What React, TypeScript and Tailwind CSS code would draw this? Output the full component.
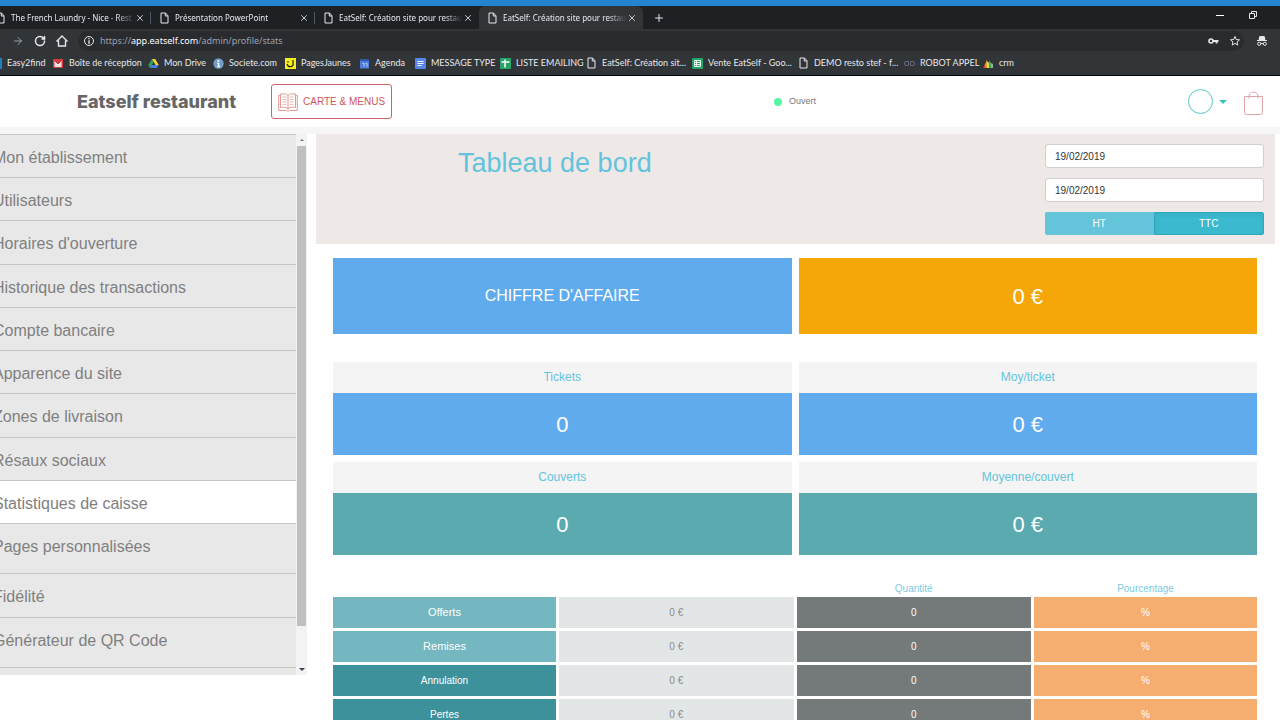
import type { ReactNode } from "react";
import { Plus, X, ArrowRight, ArrowLeft, RotateCw } from "lucide-react";

const svgProps = { fill: "none", stroke: "currentColor" };

function PageIcon() {
  return (
    <svg viewBox="0 0 11 12" className="h-3 w-[11px] shrink-0 text-gray-200" {...svgProps}>
      <path d="M2 1h4.5L9 3.8V11H2z M6.3 1v3H9" />
    </svg>
  );
}

// Bookmark favicons, all on an 11px box
const favicons: Record<string, ReactNode> = {
  easy: <rect width="11" height="11" fill="#1b7fc0" />,
  gmail: (
    <>
      <rect y="1" width="10" height="9" rx="1" fill="#d93a3f" />
      <path d="M1.5 9V2.5L5 6l3.5-3.5V9" fill="#f6e4e4" />
      <path d="M1.5 2.5L5 6l3.5-3.5" stroke="#c8373a" fill="none" />
    </>
  ),
  drive: (
    <>
      <path d="M4 1L.3 7l1.6 3L5.6 4z" fill="#2aa35c" />
      <path d="M4 1h3.2l3.5 6H7.5z" fill="#f7cf3b" />
      <path d="M1.9 10l1.7-3h7.1L9 10z" fill="#4180e0" />
    </>
  ),
  info: (
    <>
      <circle cx="5.5" cy="5.5" r="5.2" fill="#6f9cc9" />
      <circle cx="5.5" cy="2.9" r="1" fill="#fff" />
      <path d="M4 4.8h2.3v3.4h1v1H4v-1h.8V5.8H4z" fill="#fff" />
    </>
  ),
  pj: (
    <>
      <rect width="11" height="11" fill="#f7ee1d" />
      <path d="M3 3v1.5M8 2v5M2 6c1 3.5 5 3.5 6.5 .5" stroke="#222" strokeWidth="1.2" fill="none" />
    </>
  ),
  agenda: (
    <>
      <rect x="1" y="1" width="9" height="9.5" fill="#4f7de0" />
      <rect x="1" y="1" width="9" height="2" fill="#3158a8" />
      <path d="M3.5 5.5h1.5v3M6.5 5.5h1.5v3" stroke="#b9cdf7" fill="none" />
    </>
  ),
  doc: (
    <>
      <rect width="11" height="11" rx="1" fill="#5787e6" />
      <path d="M2.5 3.5h6M2.5 5.5h6M2.5 7.5h4" stroke="#fff" fill="none" />
    </>
  ),
  plus: (
    <>
      <rect width="11" height="11" fill="#27a365" />
      <path d="M1.5 4h8M5 1.5v8" stroke="#fff" strokeWidth="1.5" fill="none" />
    </>
  ),
  sheet: (
    <>
      <rect width="11" height="11" rx="1" fill="#21a565" />
      <path d="M2.5 2.5h6v6h-6zM2.5 4.5h6M2.5 6.5h6M4.5 2.5v6" stroke="#fff" strokeWidth=".9" fill="none" />
    </>
  ),
  robot: (
    <path
      d="M4.5 3.5H2a1.5 1.5 0 0 0-1.5 1.5v1A1.5 1.5 0 0 0 2 7.5h2.5zM6.5 3.5H9a1.5 1.5 0 0 1 1.5 1.5v1A1.5 1.5 0 0 1 9 7.5H6.5z"
      stroke="#676a78"
      fill="none"
    />
  ),
  crm: (
    <>
      <path d="M.5 10L4 1.5V10z" fill="#e8a52b" />
      <path d="M4 10V3l2 2v5z" fill="#d6dd45" />
      <path d="M6 10V2l2 3v5z" fill="#41a35c" />
      <path d="M8 10V5l2 1v4z" fill="#8bb796" />
      <path d="M.5 10L2 6l1 4z" fill="#d5483a" />
    </>
  ),
};

const tabs = [
  { title: "The French Laundry - Nice - Rest", active: false },
  { title: "Présentation PowerPoint", active: false },
  { title: "EatSelf: Création site pour restau", active: false },
  { title: "EatSelf: Création site pour restau", active: true },
];

const bookmarks = [
  { label: "Easy2find", icon: "easy", width: "w-[62px]" },
  { label: "Boîte de réception", icon: "gmail", width: "w-[95px]" },
  { label: "Mon Drive", icon: "drive", width: "w-[65px]" },
  { label: "Societe.com", icon: "info", width: "w-[72px]" },
  { label: "PagesJaunes", icon: "pj", width: "w-[74px]" },
  { label: "Agenda", icon: "agenda", width: "w-[56px]" },
  { label: "MESSAGE TYPE", icon: "doc", width: "w-[85px]" },
  { label: "LISTE EMAILING", icon: "plus", width: "w-[86px]" },
  { label: "EatSelf: Création sit...", icon: "page", width: "w-[106px]" },
  { label: "Vente EatSelf - Goo...", icon: "sheet", width: "w-[106px]" },
  { label: "DEMO resto stef - f...", icon: "page", width: "w-[106px]" },
  { label: "ROBOT APPEL", icon: "robot", width: "w-[79px]" },
  { label: "crm", icon: "crm", width: "w-[50px]" },
];

const menu = [
  "Mon établissement",
  "Utilisateurs",
  "Horaires d'ouverture",
  "Historique des transactions",
  "Compte bancaire",
  "Apparence du site",
  "Zones de livraison",
  "Résaux sociaux",
  "Statistiques de caisse",
];

const menuExtra = [
  { label: "Pages personnalisées", height: "h-[50px]" },
  { label: "Fidélité", height: "h-[44px]" },
  { label: "Générateur de QR Code", height: "h-[50px]" },
];

const stats = [
  { label: "Tickets", value: "0", color: "bg-[#60abee]" },
  { label: "Moy/ticket", value: "0 €", color: "bg-[#60abee]" },
  { label: "Couverts", value: "0", color: "bg-[#5aaab0]" },
  { label: "Moyenne/couvert", value: "0 €", color: "bg-[#5aaab0]" },
];

const rows = [
  { label: "Offerts", style: "bg-[#74b7c0] text-[11px]" },
  { label: "Remises", style: "bg-[#74b7c0] text-[11px]" },
  { label: "Annulation", style: "bg-[#3c919b] text-[10px]" },
  { label: "Pertes", style: "bg-[#3c919b] text-[10px]" },
];

function BrowserChrome() {
  return (
    <div className="border-b border-black bg-[#323538] font-['Lato','Open_Sans',sans-serif] text-[9px] text-gray-200">
      <div className="h-1.5 bg-[#2385d1]" />
      <div className="flex h-[23px] items-stretch bg-[#1d2124]">
        <div className="-ml-[13px] flex">
          {tabs.map((tab, i) => (
            <div
              key={i}
              className={`flex w-[164px] items-center pl-2 ${
                tab.active ? "rounded-t-md bg-[#323538]" : ""
              }`}
            >
              <PageIcon />
              <span className="ml-[5px] flex-1 overflow-hidden mask-r-from-85% font-['Noto_Sans',sans-serif] text-[8px] whitespace-nowrap">
                {tab.title}
              </span>
              <button aria-label="Fermer l'onglet">
                <X className="size-2.5" />
              </button>
              <span className={`ml-[5px] h-3 w-px ${i < 2 ? "bg-gray-600" : ""}`} />
            </div>
          ))}
        </div>
        <button aria-label="Nouvel onglet" className="ml-2.5">
          <Plus className="size-3" />
        </button>
        <div className="ml-auto flex items-start gap-[22px] pt-1 pr-[22px]">
          <button aria-label="Réduire" className="flex size-2.5 items-center">
            <span className="h-px w-2 bg-white" />
          </button>
          <button aria-label="Restaurer">
            <svg viewBox="0 0 10 10" className="size-2.5" {...svgProps}>
              <path d="M1.5 3.5h5v5h-5zM3.5 3V1.5h5v5H7" />
            </svg>
          </button>
        </div>
      </div>

      <div className="flex h-6 items-center">
        <ArrowLeft className="-ml-2.5 size-3 shrink-0" />
        <ArrowRight className="ml-2.5 size-3 shrink-0 text-gray-400" />
        <RotateCw className="ml-2.5 size-3 shrink-0" strokeWidth={3} />
        <svg viewBox="0 0 12 12" className="ml-2.5 size-3 shrink-0" {...svgProps}>
          <path d="M.5 6.5L6 1l5.5 5.5M2.5 5.5V11h7V5.5" strokeWidth="1.4" />
        </svg>
        <div className="ml-2.5 flex h-5 flex-1 items-center rounded-full bg-[#292b2e] pr-[3px] pl-[5px]">
          <svg viewBox="0 0 12 12" className="size-3" {...svgProps}>
            <circle cx="6" cy="6" r="4.5" />
            <path d="M6 3v1.2M6 5.2V9" strokeWidth="1.3" />
          </svg>
          <span className="ml-[5px] font-['Noto_Sans',sans-serif] text-[9px] text-gray-400">
            https://<span className="text-white">app.eatself.com</span>/admin/profile/stats
          </span>
          <svg viewBox="0 0 11 8" className="ml-auto h-2 w-[11px]" {...svgProps}>
            <circle cx="3" cy="4" r="2" strokeWidth="1.6" />
            <path d="M5 4h5.5M8.5 4v2.5" strokeWidth="1.8" />
          </svg>
          <svg viewBox="0 0 12 12" className="ml-2.5 size-3" {...svgProps}>
            <path d="M6 1.5l1.3 3 3.2.3-2.4 2.1.7 3.2L6 8.4l-2.8 1.7.7-3.2L1.5 4.8l3.2-.3z" />
          </svg>
        </div>
        <svg viewBox="0 0 12 12" className="mr-3 ml-3 size-3 shrink-0" {...svgProps}>
          <path d="M3 4.5L3.8 1.5h4.4L9 4.5z" fill="currentColor" />
          <path d="M1 5.5h10M4.8 8.5h2.4" />
          <circle cx="3.2" cy="8.8" r="1.6" />
          <circle cx="8.8" cy="8.8" r="1.6" />
        </svg>
      </div>

      <nav className="-ml-[9px] flex h-[22px] items-center pb-0.5 whitespace-nowrap">
        {bookmarks.map((b) => (
          <a key={b.label} href="#" className={`flex shrink-0 items-center gap-[5px] ${b.width}`}>
            {b.icon === "page" ? (
              <PageIcon />
            ) : (
              <svg viewBox="0 0 11 11" className="size-[11px] shrink-0">
                {favicons[b.icon]}
              </svg>
            )}
            {b.label}
          </a>
        ))}
      </nav>
    </div>
  );
}

function Header() {
  return (
    <header className="flex h-[51px] items-center bg-white pr-4 pl-[77px]">
      <h1 className="w-[194px] font-['Inter',sans-serif] text-[18px] font-extrabold whitespace-nowrap text-[#666]">
        Eatself restaurant
      </h1>
      <a
        href="#"
        className="flex h-[35px] items-center gap-[5px] rounded-[3px] border border-[#d0626a] px-1.5 text-[10px] whitespace-nowrap text-[#d0565c]"
      >
        <svg viewBox="0 0 20 20" className="size-5 text-[#e09a94]" {...svgProps}>
          <path d="M10 3.5C8 1.5 5 1.5 2.5 2v13.5c2.5-.5 5.5-.5 7.5 1.5 2-2 5-2 7.5-1.5V2C15 1.5 12 1.5 10 3.5zM10 3.5V17" />
          <path d="M2.5 3.5H.7v15h7.8l1.5.8 1.5-.8h7.8v-15h-1.8" />
          <path
            d="M4.5 5c1.5-.3 3-.2 4 .6M4.5 7.5c1.5-.3 3-.2 4 .6M4.5 10c1.5-.3 3-.2 4 .6M4.5 12.5c1.5-.3 3-.2 4 .6M15.5 5c-1.5-.3-3-.2-4 .6M15.5 7.5c-1.5-.3-3-.2-4 .6M15.5 10c-1.5-.3-3-.2-4 .6M15.5 12.5c-1.5-.3-3-.2-4 .6"
            strokeWidth=".8"
          />
        </svg>
        CARTE &amp; MENUS
      </a>
      <div className="flex flex-1 items-center justify-center gap-[7px] pl-2.5 text-[9px] text-[#777]">
        <span className="size-2 rounded-full bg-[#55f5a3]" />
        Ouvert
      </div>
      <button aria-label="Compte" className="flex items-center gap-1.5">
        <span className="size-[25px] rounded-full border border-[#55c9c3]" />
        <span className="border-x-4 border-t-4 border-x-transparent border-t-[#36c3b8]" />
      </button>
      <button aria-label="Panier" className="mt-1 ml-4">
        <svg viewBox="0 0 21 25" className="h-[25px] w-[21px] text-[#dfa3a8]" {...svgProps}>
          <path d="M1.5 5.5h18v16a2 2 0 0 1-2 2h-14a2 2 0 0 1-2-2z" />
          <path d="M6 7.5v-2a4.5 4.5 0 0 1 9 0v2" />
        </svg>
      </button>
    </header>
  );
}

function Sidebar() {
  return (
    <aside className="flex h-[541px] w-[307px] shrink-0 overflow-hidden text-[16px] whitespace-nowrap text-[#808080]">
      <nav className="w-[296px] bg-[#e8e8e8]">
        <div className="flex h-[389px] flex-col">
          {menu.map((label) => (
            <a
              key={label}
              href="#"
              className={`flex-1 border-t border-[#c6c6c6] pt-[11px] leading-6 ${
                label === "Statistiques de caisse" ? "bg-white" : ""
              }`}
            >
              <span className="-ml-[7px]">{label}</span>
            </a>
          ))}
        </div>
        {menuExtra.map((item) => (
          <a
            key={item.label}
            href="#"
            className={`block border-t border-[#c6c6c6] pt-[11px] leading-6 ${item.height}`}
          >
            <span className="-ml-[7px]">{item.label}</span>
          </a>
        ))}
        <div className="h-2 border-t border-[#c6c6c6]" />
      </nav>
      {/* scrollbar */}
      <div className="flex flex-1 flex-col items-center bg-[#f3f3f3]">
        <div className="flex h-3 items-center">
          <span className="border-x-2 border-b-2 border-x-transparent border-b-gray-500" />
        </div>
        <div className="h-[480px] w-[9px] bg-[#bfbfbf]" />
        <div className="mt-auto flex h-3 items-center">
          <span className="border-x-3 border-t-3 border-x-transparent border-t-gray-700" />
        </div>
      </div>
    </aside>
  );
}

function Dashboard() {
  const field =
    "block h-6 w-full rounded-[3px] border border-[#d2cece] bg-white px-[9px] text-[10px] text-[#333]";
  return (
    <main className="ml-[9px] min-w-0 flex-1">
      <section className="flex h-[110px] justify-between bg-[#eee9e7] pr-[11px]">
        <h2 className="flex-1 pt-[11px] pl-[142px] text-[27px] leading-9 text-[#64c3dc]">
          Tableau de bord
        </h2>
        <div className="w-[219px] pt-2.5">
          <input aria-label="Date de début" defaultValue="19/02/2019" className={field} />
          <input aria-label="Date de fin" defaultValue="19/02/2019" className={`mt-2.5 ${field}`} />
          <div className="mt-2.5 flex h-[23px] text-[10px] text-white">
            <button className="flex-1 rounded-l-[2px] bg-[#63c4da]">HT</button>
            <button className="flex-1 rounded-r-[2px] border border-[#31a5bb] bg-[#3ab9cf] shadow-inner">
              TTC
            </button>
          </div>
        </div>
      </section>

      <div className="pt-3.5 pr-[18px] pl-[17px] text-center">
        <section className="grid h-[76px] grid-cols-2 items-stretch gap-x-[7px] text-white">
          <div className="flex items-center justify-center bg-[#60abee] text-[16px]">
            CHIFFRE D'AFFAIRE
          </div>
          <div className="flex items-center justify-center bg-[#f5a709] text-[22px]">0 €</div>
        </section>

        <section className="mt-7 grid grid-cols-2 gap-x-[7px] gap-y-[7px]">
          {stats.map((s) => (
            <div key={s.label}>
              <div className="flex h-[31px] items-center justify-center bg-[#f4f4f4] pb-0.5 text-[12px] text-[#64c3dc]">
                {s.label}
              </div>
              <div
                className={`flex h-[62px] items-center justify-center text-[22px] text-white ${s.color}`}
              >
                {s.value}
              </div>
            </div>
          ))}
        </section>

        <div className="-mx-[3px] mt-[25px]">
          <table className="w-full table-fixed border-separate border-spacing-[3px] text-[10px]">
            <colgroup>
              <col className="w-[223px]" />
              <col />
              <col />
              <col className="w-[223px]" />
            </colgroup>
            <thead>
              <tr className="h-[11px] leading-[11px] text-[#7ccbdf]">
                <td />
                <td />
                <th className="font-normal">Quantité</th>
                <th className="font-normal">Pourcentage</th>
              </tr>
            </thead>
            <tbody>
              {rows.map((r) => (
                <tr key={r.label} className="h-[31px] text-white">
                  <th className={`font-normal ${r.style}`}>{r.label}</th>
                  <td className="bg-[#e3e6e6] text-[#8b8b8b]">0 €</td>
                  <td className="bg-[#747979]">0</td>
                  <td className="bg-[#f6ad70]">%</td>
                </tr>
              ))}
            </tbody>
          </table>
        </div>
      </div>
    </main>
  );
}

export default function App() {
  return (
    <div className="h-screen overflow-hidden bg-white font-['Liberation_Sans',Arial,sans-serif]">
      <BrowserChrome />
      <Header />
      <div className="h-[7px] bg-[#f7f6f6]" />
      <div className="flex items-start pr-[5px]">
        <Sidebar />
        <Dashboard />
      </div>
    </div>
  );
}
